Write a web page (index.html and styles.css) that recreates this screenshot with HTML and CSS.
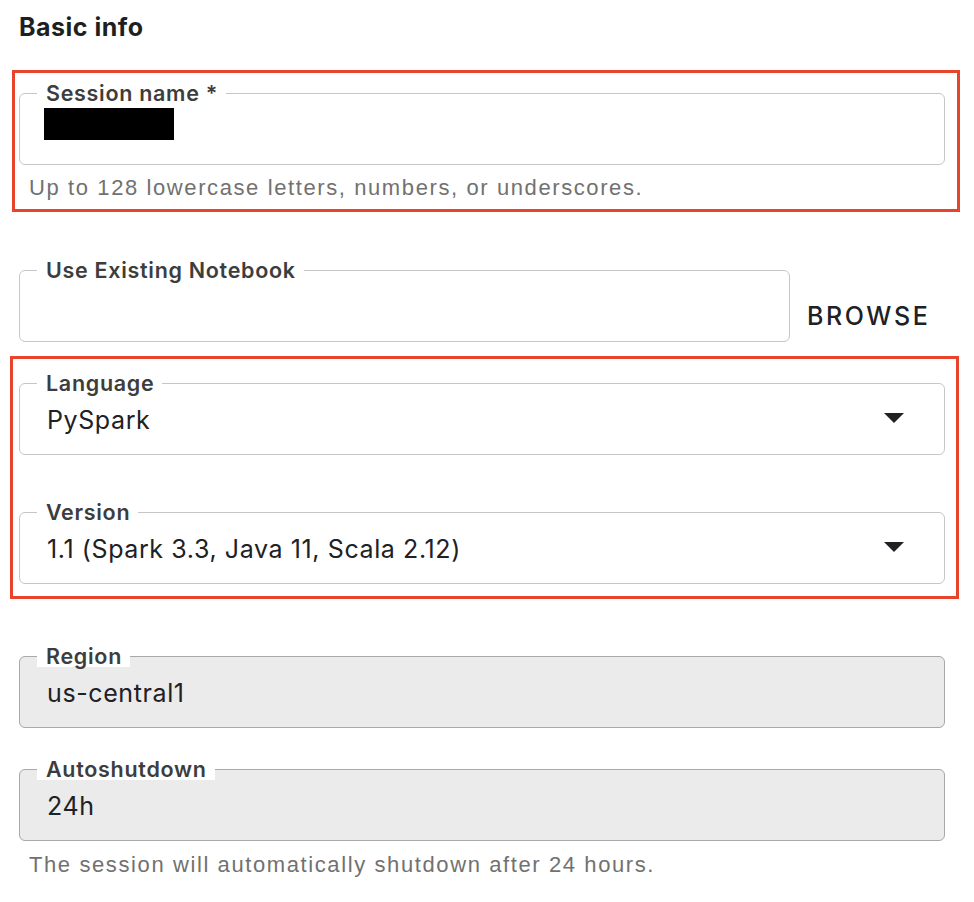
FILE: index.html
```html
<!DOCTYPE html>
<html>
<head>
<meta charset="utf-8">
<link rel="stylesheet" href="styles.css">
</head>
<body>
<div class="page">
  <h2 class="title">Basic info</h2>

  <div class="mark mark-1">
    <fieldset class="field">
      <legend class="label">Session name *</legend>
      <div class="value"><span class="redact"></span></div>
    </fieldset>
    <div class="helper">Up to 128 lowercase letters, numbers, or underscores.</div>
  </div>

  <div class="notebook-row">
    <fieldset class="field notebook">
      <legend class="label">Use Existing Notebook</legend>
      <div class="value"></div>
    </fieldset>
    <button class="browse">BROWSE</button>
  </div>

  <div class="mark mark-2">
    <fieldset class="field">
      <legend class="label">Language</legend>
      <div class="value"><span>PySpark</span><span class="arrow"></span></div>
    </fieldset>
    <fieldset class="field gap-version">
      <legend class="label">Version</legend>
      <div class="value"><span>1.1 (Spark 3.3, Java 11, Scala 2.12)</span><span class="arrow"></span></div>
    </fieldset>
  </div>

  <fieldset class="field disabled region">
    <legend class="label">Region</legend>
    <div class="value"><span>us-central1</span></div>
  </fieldset>
  <fieldset class="field disabled shutdown">
    <legend class="label">Autoshutdown</legend>
    <div class="value"><span>24h</span></div>
  </fieldset>
  <div class="helper helper-last">The session will automatically shutdown after 24 hours.</div>
</div>
</body>
</html>
```

FILE: styles.css
```css
html, body {
  margin: 0;
  padding: 0;
  background: #ffffff;
}
body {
  font-family: Inter, "Noto Sans", sans-serif;
  color: #202124;
}
.page {
  width: 926px;
  padding-left: 19px;
}
.title {
  margin: 0 0 28px 0;
  padding-top: 12px;
  font-size: 25px;
  line-height: 30px;
  font-weight: 700;
  letter-spacing: 0.5px;
  color: #1f1f1f;
}
.mark {
  border: 3px solid #e8432b;
}
.mark-1 {
  margin-left: -7px;
  width: 926px;
  padding: 9px 12px 9px 4px;
}
.mark-2 {
  margin-top: 14px;
  margin-left: -9px;
  width: 926px;
  padding: 13px 11px 12px 6px;
}
.field {
  margin: 0;
  padding: 0;
  border: 1px solid #c6c6c6;
  border-radius: 6px;
  min-width: 0;
  box-sizing: border-box;
  width: 926px;
}
.label {
  margin-left: 17px;
  padding: 0 8px 0 9px;
  font-size: 21.5px;
  line-height: 22px;
  font-weight: 600;
  letter-spacing: 0.7px;
  color: #3d3d3d;
  background: #ffffff;
}
.value {
  height: 60px;
  box-sizing: border-box;
  padding: 12px 40px 20px 27px;
  display: flex;
  align-items: center;
  justify-content: space-between;
  font-size: 25px;
  line-height: 28px;
  letter-spacing: 0.6px;
  color: #202124;
}
.value > span:first-child {
  align-self: flex-start;
}
.redact {
  display: block;
  width: 130px;
  height: 32px;
  background: #000000;
  margin-left: -3px;
  margin-top: -8px;
}
.arrow {
  width: 0;
  height: 0;
  border-left: 10px solid transparent;
  border-right: 10px solid transparent;
  border-top: 10px solid #202124;
  align-self: center;
  margin-top: -4px;
}
.helper {
  margin-top: 11px;
  padding-left: 10px;
  font-family: "Liberation Sans", Arial, sans-serif;
  font-size: 22px;
  line-height: 24px;
  color: #717171;
  letter-spacing: 1.6px;
}
.helper-last {
  margin-top: 12px;
}
.notebook-row {
  margin-top: 47px;
  display: flex;
  align-items: flex-end;
}
.notebook {
  width: 771px;
}
.browse {
  margin: 0 0 11px 17px;
  padding: 0;
  border: none;
  background: none;
  font-family: Inter, "Noto Sans", sans-serif;
  font-size: 25px;
  line-height: 30px;
  font-weight: 500;
  letter-spacing: 2.6px;
  color: #202124;
}
.gap-version {
  margin-top: 46px;
}
.disabled {
  background: #ebebeb;
  border-color: #a9a9a9;
}
.region {
  margin-top: 46px;
}
.shutdown {
  margin-top: 30px;
}
```
